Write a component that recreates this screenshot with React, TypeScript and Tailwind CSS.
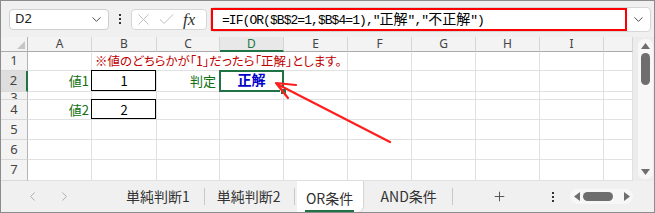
import { Check, ChevronDown, ChevronLeft, ChevronRight, Plus, X } from "lucide-react";

const cell = "border-r border-b border-[#e1e1e1] bg-white";
const rowHead =
  "flex items-center justify-center overflow-hidden border-r border-b border-r-[#b4b4b4] border-b-[#d9d9d9] bg-[#f3f3f3] font-['Noto_Sans',sans-serif] text-[13px] text-[#444]";
const colHead =
  "flex items-center justify-center border-r border-b border-r-[#d6d6d6] border-b-[#ababab] bg-[#f3f3f3] font-['Noto_Sans',sans-serif] text-[12px] text-[#444]";
const green = "font-['Noto_Sans_CJK_JP',sans-serif] text-[13px] text-[#107010]";

function Empty({ n }: { n: number }) {
  return (
    <>
      {Array.from({ length: n }, (_, i) => (
        <div key={i} className={cell} />
      ))}
    </>
  );
}

function Jp({ children }: { children: string }) {
  return <span className="font-['Noto_Sans_CJK_JP',sans-serif] text-[14px] tracking-normal">{children}</span>;
}

function Dots() {
  return (
    <div className="flex flex-col gap-[2px]">
      <span className="h-[2px] w-[2px] bg-[#333]" />
      <span className="h-[2px] w-[2px] bg-[#333]" />
      <span className="h-[2px] w-[2px] bg-[#333]" />
    </div>
  );
}

function Toolbar() {
  return (
    <div className="flex h-[36px] shrink-0 items-center bg-[#f0f0f0]">
      <div className="ml-[8px] flex h-[21px] w-[100px] items-center justify-between rounded-[4px] border border-[#cfcfcf] bg-white pl-[5px] pr-[4px]">
        <span className="font-['Noto_Sans',sans-serif] text-[13px] text-[#222]">D2</span>
        <ChevronDown size={15} strokeWidth={1.5} className="text-[#444]" />
      </div>
      <div className="ml-[10px]">
        <Dots />
      </div>
      <div className="ml-[10px] flex h-[21px] w-[76px] items-center rounded-[4px] border border-[#d6d6d6] bg-white">
        <X size={19} strokeWidth={1.2} className="ml-[2px] text-[#bdbdbd]" />
        <Check size={19} strokeWidth={1.2} className="ml-[4px] text-[#bdbdbd]" />
        <span className="ml-[7px] font-['Liberation_Serif',serif] text-[17px] italic leading-none text-[#333]">fx</span>
      </div>
      <div className="ml-[3px] mr-[3px] flex h-[25px] flex-1 items-center rounded-[4px] border border-[#d6d6d6] bg-white">
        <div className="flex h-[23px] w-[416px] items-center border-2 border-[#ff0000] pl-[9px]">
          <div className="whitespace-nowrap font-['Liberation_Mono',monospace] text-[13px] tracking-[-0.95px] text-black">
            =IF(OR($B$2=1,$B$4=1),"<Jp>正解</Jp>","<Jp>不正解</Jp>")
          </div>
        </div>
        <ChevronDown size={15} strokeWidth={1.5} className="ml-[4px] text-[#444]" />
      </div>
    </div>
  );
}

function Sheet() {
  const heads = ["A", "B", "C", "D", "E", "F", "G", "H", "I"];
  return (
    <div className="grid w-[632px] grid-cols-[27px_64px_65px_63px_64px_64px_64px_64px_64px_64px_29px] grid-rows-[15px_19px_21px_8px_20px_20px_20px_21px]">
      {/* header row */}
      <div className="relative border-r border-b border-r-[#b4b4b4] border-b-[#ababab] bg-[#f3f3f3]">
        <svg className="absolute bottom-[2px] right-[2px]" width="8" height="8" viewBox="0 0 8 8">
          <polygon points="8,0 8,8 0,8" fill="#c6c6c6" />
        </svg>
      </div>
      {heads.map((h) =>
        h === "D" ? (
          <div
            key={h}
            className="flex items-center justify-center border-r border-b-2 border-r-[#d6d6d6] border-b-[#217346] bg-[#e8e8e8] font-['Noto_Sans',sans-serif] text-[12px] text-[#217346]"
          >
            {h}
          </div>
        ) : (
          <div key={h} className={colHead}>
            {h}
          </div>
        )
      )}
      <div className={colHead} />

      {/* row 1 */}
      <div className={rowHead}>1</div>
      <div className={cell} />
      <div className="col-span-4 flex items-end border-r border-b border-[#e1e1e1] bg-white pb-[1px] pl-[3px]">
        <span className="whitespace-nowrap font-['Noto_Sans_CJK_JP',sans-serif] text-[12.5px] leading-[16px] text-[#c00000] [font-feature-settings:'palt']">
          ※値のどちらかが「1」だったら「正解」とします。
        </span>
      </div>
      <Empty n={5} />

      {/* row 2 */}
      <div className="flex items-center justify-center border-b border-r-2 border-b-[#d9d9d9] border-r-[#217346] bg-[#dedede] font-['Noto_Sans',sans-serif] text-[13px] text-[#444]">
        2
      </div>
      <div className={`${cell} flex items-end justify-end pb-[1px] pr-[2px]`}>
        <span className={green}>値1</span>
      </div>
      <div className={`${cell} relative flex items-end justify-center pb-[1px]`}>
        <div className="absolute -left-px -top-px bottom-0 right-0 border border-black" />
        <span className="font-['Noto_Sans_CJK_JP',sans-serif] text-[13px] text-black">1</span>
      </div>
      <div className={`${cell} flex items-end justify-end pb-[1px] pr-[3px]`}>
        <span className={green}>判定</span>
      </div>
      <div className={`${cell} relative flex items-end justify-center pb-[1px]`}>
        <div className="absolute -bottom-px -left-px -right-px -top-px border-2 border-[#217346]" />
        <div className="absolute -bottom-[4px] -right-[4px] h-[7px] w-[7px] border border-white bg-[#217346]" />
        <span className="font-['Noto_Sans_CJK_JP',sans-serif] text-[14px] font-bold text-[#0000c8]">正解</span>
      </div>
      <Empty n={6} />

      {/* row 3 (squeezed) */}
      <div className={`${rowHead} !items-start`}>
        <span className="-mt-[2px] leading-[14px]">3</span>
      </div>
      <Empty n={10} />

      {/* row 4 */}
      <div className={rowHead}>4</div>
      <div className={`${cell} flex items-center justify-end pr-[2px]`}>
        <span className={green}>値2</span>
      </div>
      <div className={`${cell} relative flex items-center justify-center`}>
        <div className="absolute -left-px -top-px bottom-0 right-0 border border-black" />
        <span className="font-['Noto_Sans_CJK_JP',sans-serif] text-[13px] text-black">2</span>
      </div>
      <Empty n={8} />

      {["5", "6", "7"].map((r) => (
        <div key={r} className="contents">
          <div className={rowHead}>{r}</div>
          <Empty n={10} />
        </div>
      ))}
    </div>
  );
}

function VScroll() {
  return (
    <div className="flex w-[21px] flex-col bg-[#ececec]">
      <div className="ml-[5px] mt-[2px] flex h-[140px] w-[15px] flex-col items-center rounded-[6px] bg-[#f7f7f7]">
        <svg className="mt-[4px]" width="9" height="6" viewBox="0 0 9 6">
          <polygon points="4.5,0 9,6 0,6" fill="#6e6e6e" />
        </svg>
        <div className="mt-[4px] h-[32px] w-[9px] rounded-full bg-[#6e6e6e]" />
        <div className="flex-1" />
        <svg className="mb-[4px]" width="9" height="6" viewBox="0 0 9 6">
          <polygon points="0,0 9,0 4.5,6" fill="#6e6e6e" />
        </svg>
      </div>
    </div>
  );
}

function TabBar() {
  const tab = "whitespace-nowrap font-['Noto_Sans_CJK_JP',sans-serif] text-[14px] text-[#333]";
  return (
    <div className="flex h-[31px] shrink-0 items-center bg-[#f0f0f0]">
      <ChevronLeft size={15} strokeWidth={1.5} className="ml-[24px] text-[#a8a8a8]" />
      <ChevronRight size={15} strokeWidth={1.5} className="ml-[17px] text-[#a8a8a8]" />
      <span className={`${tab} ml-[54px]`}>単純判断1</span>
      <span className="ml-[14px] h-[17px] w-px bg-[#c8c8c8]" />
      <span className={`${tab} ml-[12px]`}>単純判断2</span>
      <span className="ml-[13px] h-[17px] w-px bg-[#c8c8c8]" />
      <div className="ml-[2px] flex w-[66px] self-stretch flex-col items-center rounded-br-[6px] bg-white pt-[7px] shadow-[1px_0_1px_rgba(0,0,0,0.12)]">
        <span className={tab}>OR条件</span>
        <span className="mt-[1px] h-[2px] w-[49px] bg-[#217346]" />
      </div>
      <span className={`${tab} ml-[18px]`}>AND条件</span>
      <span className="ml-[15px] h-[17px] w-px bg-[#c8c8c8]" />
      <Plus size={15} strokeWidth={1.4} className="ml-[39px] text-[#444]" />
      <div className="ml-[45px]">
        <Dots />
      </div>
      <div className="ml-[16px] flex h-[15px] w-[63px] items-center rounded-full bg-[#f7f7f7]">
        <svg className="ml-[4px]" width="6" height="9" viewBox="0 0 6 9">
          <polygon points="6,0 6,9 0,4.5" fill="#6e6e6e" />
        </svg>
        <div className="ml-[3px] h-[9px] w-[30px] rounded-full bg-[#6e6e6e]" />
        <div className="flex-1" />
        <svg className="mr-[3px]" width="6" height="9" viewBox="0 0 6 9">
          <polygon points="0,0 6,4.5 0,9" fill="#6e6e6e" />
        </svg>
      </div>
    </div>
  );
}

export default function App() {
  return (
    <div className="relative flex h-[213px] w-[655px] flex-col overflow-hidden border border-[#8c8c8c] bg-[#f0f0f0]">
      <Toolbar />
      <div className="flex">
        <Sheet />
        <VScroll />
      </div>
      <TabBar />
      {/* red annotation arrow */}
      <svg
        className="pointer-events-none absolute -left-px -top-px"
        width="655"
        height="213"
        viewBox="0 0 655 213"
      >
        <g stroke="#ff1e1e" strokeWidth="2.2" strokeLinecap="round" strokeLinejoin="round" fill="none">
          <line x1="390" y1="142" x2="277" y2="84" />
          <polyline points="296,85 276,83 288,98" />
        </g>
      </svg>
    </div>
  );
}
